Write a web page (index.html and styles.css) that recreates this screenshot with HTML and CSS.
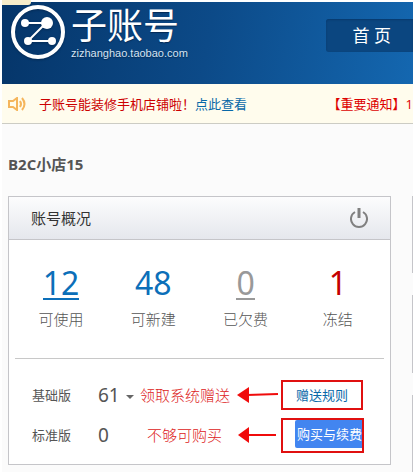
FILE: index.html
```html
<!DOCTYPE html>
<html lang="zh-CN">
<head>
	<meta charset="utf-8">
	<title>子账号</title>
	<link rel="stylesheet" href="styles.css">
</head>
<body>
	<div class="tab"></div>
	<header class="header">
		<a href="#" class="logo">
			<svg class="logo-icon" width="54" height="54" viewBox="0 0 54 54">
				<circle cx="27" cy="27" r="25" fill="none" stroke="#fff" stroke-width="4"/>
				<path d="M14 18H35L17 36H40" fill="none" stroke="#fff" stroke-width="2"/>
				<circle cx="14" cy="18" r="4" fill="#fff"/>
				<circle cx="36" cy="18" r="6" fill="#fff"/>
				<circle cx="17" cy="36" r="4" fill="#fff"/>
				<circle cx="41" cy="36" r="4" fill="#fff"/>
			</svg>
			<span class="logo-text">
				<span class="logo-name">子账号</span>
				<span class="logo-domain">zizhanghao.taobao.com</span>
			</span>
		</a>
		<nav class="nav">
			<a href="#">首 页</a>
		</nav>
	</header>
	<div class="notice">
		<svg class="horn" width="18" height="14" viewBox="0 0 18 14" fill="none" stroke="#f5b55c" stroke-width="2">
			<path d="M1 4H5L9 1V13L5 10H1Z"/>
			<path d="M12 4Q14 7 12 10"/>
			<path d="M14 1Q19 7 14 13"/>
		</svg>
		<p class="notice-text">子账号能装修手机店铺啦！<a href="#">点此查看</a></p>
		<p class="notice-important">【重要通知】1</p>
	</div>
	<main class="content">
		<h1 class="shop">B2C小店15</h1>
		<div class="columns">
			<section class="card">
				<div class="card-header">
					<h2>账号概况</h2>
					<button type="button" class="power" aria-label="关闭">
						<svg width="18" height="20" viewBox="0 0 18 20" fill="none" stroke="#808080" stroke-width="2">
							<path d="M5 4A8 8 0 1 0 13 4"/>
							<path d="M9 0V10" stroke-width="3"/>
						</svg>
					</button>
				</div>
				<div class="card-body">
					<div class="stats">
						<div class="stat"><a href="#" class="num blue line">12</a><span>可使用</span></div>
						<div class="stat"><a href="#" class="num blue">48</a><span>可新建</span></div>
						<div class="stat"><a href="#" class="num gray line">0</a><span>已欠费</span></div>
						<div class="stat"><a href="#" class="num red">1</a><span>冻结</span></div>
					</div>
					<div class="versions">
						<div class="version">
							<span class="version-name">基础版</span>
							<span class="version-num">61<i class="caret"></i></span>
							<span class="note">领取系统赠送</span>
							<svg class="arrow" width="42" height="16" viewBox="0 0 42 16">
								<path d="M10 8L41 7" stroke="#f00b0b" stroke-width="2"/>
								<path d="M0 8L12 0V16Z" fill="#f00b0b"/>
							</svg>
							<span class="mark mark-link"><a href="#">赠送规则</a></span>
						</div>
						<div class="version">
							<span class="version-name">标准版</span>
							<span class="version-num">0</span>
							<span class="note note-buy">不够可购买</span>
							<svg class="arrow" width="42" height="16" viewBox="0 0 42 16">
								<path d="M10 8H39" stroke="#f00b0b" stroke-width="2"/>
								<path d="M1 8L12 0V16Z" fill="#f00b0b"/>
							</svg>
							<span class="mark mark-buy"><button type="button" class="buy">购买与续费</button></span>
						</div>
					</div>
				</div>
			</section>
			<aside class="side">
				<div class="panel"></div>
				<div class="panel"></div>
				<div class="panel"></div>
			</aside>
		</div>
	</main>
</body>
</html>
```
FILE: styles.css
```css
* {
	box-sizing: border-box;
}
body {
	display: flex;
	flex-direction: column;
	min-height: 100vh;
	margin: 0;
	padding: 2px;
	background-color: #ffffff;
	color: #555555;
	font-family: "Open Sans", "Noto Sans CJK SC", sans-serif;
	font-size: 13px;
	line-height: 20px;
}
h1, h2, p {
	margin: 0;
}
a {
	color: #0868a8;
	text-decoration: none;
}
.tab {
	position: absolute;
	top: 0;
	left: 2px;
	width: 29px;
	height: 5px;
	background-color: #f7edca;
	border-radius: 0 0 3px 0;
}
.header {
	display: flex;
	justify-content: space-between;
	align-items: flex-start;
	height: 82px;
	padding: 3px 0 0 9px;
	background-image: linear-gradient(100deg, #053569, #0c4a88 50%, #1467b0);
}
.logo {
	display: flex;
	gap: 6px;
	color: #ffffff;
}
.logo-icon {
	flex: none;
	filter: drop-shadow(0 1px 1px #042a55);
}
.logo-text {
	display: flex;
	flex-direction: column;
	text-shadow: 0 1px 1px #042a55;
}
.logo-name {
	font-size: 36px;
	line-height: 41px;
}
.logo-domain {
	font-family: "Liberation Sans", sans-serif;
	font-size: 11px;
	line-height: 14px;
	color: #d5e3f2;
}
.nav {
	margin-top: 14px;
	padding: 0 22px 0 27px;
	background-color: #0b4680;
	border-radius: 3px 0 0 3px;
	box-shadow: inset 0 1px 2px #083a6d;
}
.nav a {
	color: #ffffff;
	font-size: 17px;
	line-height: 33px;
}
.notice {
	display: flex;
	align-items: center;
	height: 40px;
	padding-left: 6px;
	background-color: #fffced;
	border-bottom: 1px solid #ccccc4;
	white-space: nowrap;
	overflow: hidden;
}
.horn {
	margin-right: 13px;
}
.notice-text {
	color: #cc0000;
}
.notice-important {
	margin-left: auto;
	color: #dd0000;
}
.content {
	flex: 1;
	padding: 30px 0 7px 6px;
	background-color: #fbfbfb;
}
.shop {
	margin-bottom: 22px;
	font-size: 15px;
	line-height: 20px;
}
.columns {
	display: flex;
	gap: 21px;
}
.card {
	flex: 1;
	background-color: #ffffff;
	border: 1px solid #c5c5c9;
}
.card-header {
	display: flex;
	justify-content: space-between;
	align-items: center;
	height: 43px;
	padding: 0 22px;
	background-image: linear-gradient(#fcfcfd, #e5e7ed);
	border-bottom: 1px solid #c5c5c9;
}
.card-header h2 {
	font-size: 15px;
	font-weight: normal;
	color: #333333;
}
.power {
	display: flex;
	padding: 0;
	background: none;
	border: none;
	cursor: pointer;
}
.card-body {
	padding: 0 6px;
}
.stats {
	display: grid;
	grid-template-columns: repeat(4, 1fr);
	padding: 22px 0 29px;
	border-bottom: 1px solid #c8c8c8;
}
.stat {
	display: flex;
	flex-direction: column;
	align-items: center;
	gap: 9px;
	font-size: 15px;
	font-weight: 300;
	color: #555555;
}
.num {
	height: 38px;
	font-family: "Noto Sans", sans-serif;
	font-size: 32px;
	font-weight: normal;
	line-height: 42px;
}
.line {
	border-bottom: 2px solid;
}
.blue {
	color: #0c6fb9;
}
.gray {
	color: #999999;
}
.red {
	color: #c40000;
}
.versions {
	padding: 16px 0 9px;
}
.version {
	display: grid;
	grid-template-columns: 66px 42px 97px 44px 1fr;
	align-items: center;
	height: 40px;
	padding-left: 17px;
	white-space: nowrap;
}
.version-num {
	font-family: "Noto Sans", sans-serif;
	font-size: 19px;
}
.caret {
	display: inline-block;
	margin-left: 6px;
	border: 4px solid transparent;
	border-top-color: #666666;
	border-bottom: none;
	vertical-align: middle;
}
.note {
	color: #dd2222;
	font-size: 15px;
	font-weight: 300;
}
.note-buy {
	padding-left: 7px;
}
.mark {
	display: flex;
	justify-self: start;
	border: 2px solid #e01010;
}
.mark-link {
	padding: 3px 13px;
}
.mark-buy {
	padding: 0 0 3px 12px;
}
.buy {
	height: 28px;
	padding: 0 0 0 2px;
	background-color: #4285f0;
	border: none;
	border-radius: 2px 0 0 2px;
	color: #ffffff;
	font-family: inherit;
	font-size: 13px;
	cursor: pointer;
}
.side {
	display: flex;
	flex-direction: column;
	gap: 22px;
	width: 1px;
	margin-bottom: -7px;
}
.panel {
	flex: 1;
	background-color: #c5c5c9;
}
```
